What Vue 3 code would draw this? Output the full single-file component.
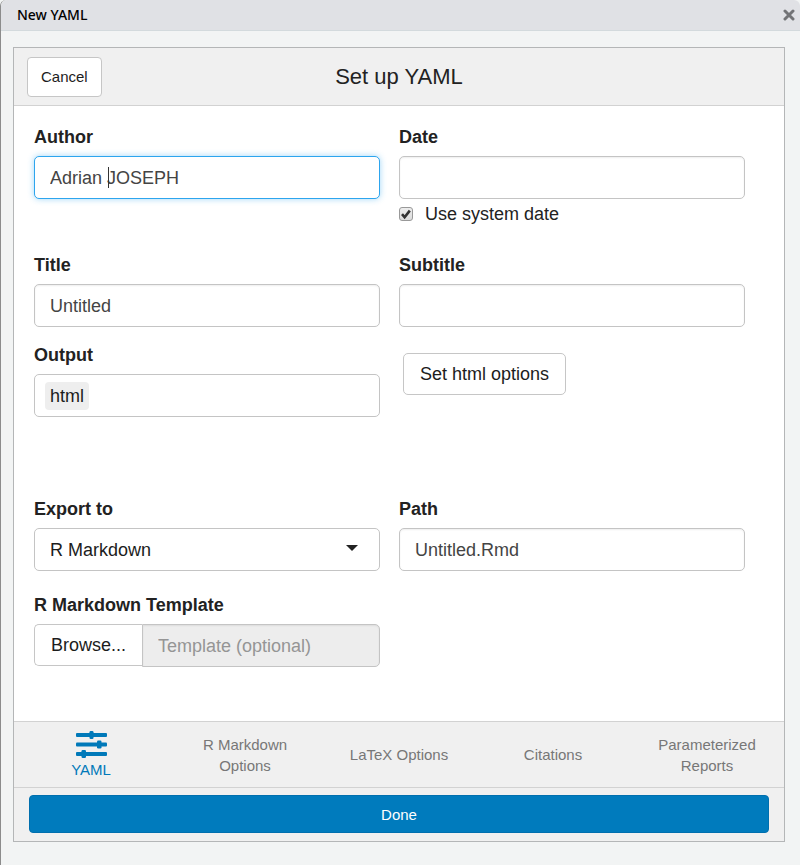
<script setup>
import { reactive, ref } from 'vue'

const form = reactive({
  author: 'Adrian JOSEPH',
  date: '',
  useSystemDate: true,
  title: 'Untitled',
  subtitle: '',
  output: 'html',
  outputQuery: '',
  exportTo: 'R Markdown',
  path: 'Untitled.Rmd'
})

const tabs = [
  { id: 'yaml', label: 'YAML' },
  { id: 'rmd', label: 'R Markdown Options' },
  { id: 'latex', label: 'LaTeX Options' },
  { id: 'citations', label: 'Citations' },
  { id: 'params', label: 'Parameterized Reports' }
]
const activeTab = ref('yaml')
</script>

<template>
  <div class="window">
    <header class="titlebar">
      <span>New YAML</span>
      <button type="button" class="close" aria-label="Close">
        <svg viewBox="0 0 12 12" width="12" height="12" aria-hidden="true">
          <path d="M2 2L10 10M10 2L2 10" fill="none" stroke="#727376" stroke-width="3" stroke-linecap="round" />
        </svg>
      </button>
    </header>

    <main class="panel">
      <div class="toolbar">
        <button type="button" class="btn btn-small">Cancel</button>
        <h1>Set up YAML</h1>
      </div>

      <form class="form" @submit.prevent>
        <div class="row row-first">
          <div class="field">
            <label for="author">Author</label>
            <div class="overlay-box">
              <input id="author" v-model="form.author" class="control focused" type="text" />
              <span class="caret" aria-hidden="true"></span>
            </div>
          </div>
          <div class="field">
            <label for="date">Date</label>
            <input id="date" v-model="form.date" class="control" type="text" />
            <div class="check">
              <input id="sysdate" v-model="form.useSystemDate" type="checkbox" />
              <svg v-if="form.useSystemDate" class="tick" viewBox="0 0 14 14" width="14" height="14" aria-hidden="true">
                <path d="M3 7.2L5.6 10.2L10.8 3.6" fill="none" stroke="#333" stroke-width="2.6" />
              </svg>
              <label for="sysdate">Use system date</label>
            </div>
          </div>
        </div>

        <div class="row row-title">
          <div class="field">
            <label for="title">Title</label>
            <input id="title" v-model="form.title" class="control" type="text" />
          </div>
          <div class="field">
            <label for="subtitle">Subtitle</label>
            <input id="subtitle" v-model="form.subtitle" class="control" type="text" />
          </div>
        </div>

        <div class="row row-output">
          <div class="field">
            <label for="output">Output</label>
            <div class="control tags">
              <span class="tag">{{ form.output }}</span>
              <input id="output" v-model="form.outputQuery" type="text" />
            </div>
          </div>
          <div class="action">
            <button type="button" class="btn">Set html options</button>
          </div>
        </div>

        <div class="row row-export">
          <div class="field">
            <label for="export">Export to</label>
            <div class="overlay-box">
              <select id="export" v-model="form.exportTo" class="control">
                <option>R Markdown</option>
              </select>
              <svg class="arrow" viewBox="0 0 12 6" width="12" height="6" aria-hidden="true">
                <path d="M0 0H12L6 6Z" fill="#222" />
              </svg>
            </div>
          </div>
          <div class="field">
            <label for="path">Path</label>
            <input id="path" v-model="form.path" class="control" type="text" />
          </div>
        </div>

        <div class="row">
          <div class="field">
            <label for="template">R Markdown Template</label>
            <div class="group">
              <button type="button" class="btn">Browse...</button>
              <input id="template" class="control" type="text" placeholder="Template (optional)" readonly />
            </div>
          </div>
        </div>
      </form>

      <nav class="tabs">
        <a
          v-for="tab in tabs"
          :key="tab.id"
          :href="'#' + tab.id"
          :class="{ active: tab.id === activeTab }"
          @click.prevent="activeTab = tab.id"
        >
          <svg v-if="tab.id === 'yaml'" viewBox="0 0 31 28" width="31" height="28" aria-hidden="true">
            <g fill="currentColor">
              <rect x="0" y="3" width="31" height="4" rx="1" />
              <rect x="0" y="12.5" width="31" height="4" rx="1" />
              <rect x="0" y="22" width="31" height="4" rx="1" />
              <rect x="13.5" y="1" width="4" height="8" rx="1.2" />
              <rect x="21" y="10.5" width="4.5" height="8" rx="1.2" />
              <rect x="5.5" y="20" width="4.5" height="8" rx="1.2" />
            </g>
          </svg>
          <span>{{ tab.label }}</span>
        </a>
      </nav>

      <footer class="footer">
        <button type="button" class="done">Done</button>
      </footer>
    </main>
  </div>
</template>

<style>
body {
  background: #f2f4f4;
}
</style>

<style scoped>
* {
  box-sizing: border-box;
}

.window {
  min-height: 100vh;
  padding-bottom: 23px;
  border-left: 1px solid #8c8c8c;
  border-radius: 6px 6px 0 0;
  background: #f2f4f4;
  font-family: "Liberation Sans", Helvetica, Arial, sans-serif;
  color: #222;
}

.titlebar {
  display: flex;
  align-items: center;
  justify-content: space-between;
  height: 31px;
  padding: 0 5px 1px 16px;
  border-bottom: 1px solid #d3dadd;
  border-radius: 6px 6px 0 0;
  background: #e0e1e5;
  font-family: "Noto Sans", "Open Sans", sans-serif;
  font-size: 14px;
  font-weight: 500;
  line-height: 20px;
  color: #000;
}

.close {
  display: flex;
  padding: 0;
  border: 0;
  background: none;
}

.panel {
  margin: 16px 15px 0 12px;
  border: 1px solid #b4b6b7;
  background: #fff;
}

.toolbar {
  display: grid;
  grid-template-columns: 1fr auto 1fr;
  align-items: center;
  height: 58px;
  padding: 0 13px;
  border-bottom: 1px solid #d2d2d2;
  background: #f0f0f0;
}

h1 {
  margin: 0;
  font-size: 22px;
  font-weight: 500;
  line-height: 28px;
}

.btn {
  height: 42px;
  padding: 0 16px;
  border: 1px solid #c6c6c6;
  border-radius: 5px;
  background: #fff;
  font-family: inherit;
  font-size: 18px;
  color: #1c1c1c;
}

.btn-small {
  justify-self: start;
  height: 40px;
  padding: 0 13px;
  border-radius: 4px;
  font-size: 15px;
}

.form {
  padding: 18px 39px 54px 20px;
}

.row {
  display: grid;
  grid-template-columns: 1fr 1fr;
  column-gap: 19px;
}

.row-first {
  margin-bottom: 25px;
}

.row-title {
  margin-bottom: 15px;
}

.row-output {
  margin-bottom: 79px;
}

.row-export {
  margin-bottom: 21px;
}

.field {
  display: flex;
  flex-direction: column;
  min-width: 0;
}

.field > label {
  margin-bottom: 6px;
  font-size: 18px;
  font-weight: 700;
  line-height: 26px;
}

.control {
  width: 100%;
  height: 43px;
  padding: 2px 15px 0;
  border: 1px solid #c4c4c4;
  border-radius: 5px;
  outline: 0;
  background: #fff;
  box-shadow: inset 0 1px 2px rgba(0, 0, 0, 0.07);
  font-family: inherit;
  font-size: 18px;
  color: #444;
}

.focused {
  border-color: #2da5ee;
  box-shadow: 0 0 6px rgba(45, 165, 238, 0.45);
}

.overlay-box {
  position: relative;
}

.caret {
  position: absolute;
  top: 11px;
  left: 74px;
  width: 1px;
  height: 21px;
  background: #333;
}

.check {
  position: relative;
  display: flex;
  align-items: center;
  gap: 12px;
  margin-top: 2px;
  font-size: 18px;
  line-height: 26px;
}

.check input {
  width: 14px;
  height: 14px;
  margin: 0;
  appearance: none;
  border: 1px solid #999;
  border-radius: 3px;
  background: linear-gradient(#ededed, #dcdcdc);
}

.tick {
  position: absolute;
  left: 0;
  pointer-events: none;
}

.tags {
  display: flex;
  align-items: center;
  gap: 4px;
  padding: 0 10px;
  box-shadow: none;
}

.tag {
  padding: 0 5px;
  border-radius: 4px;
  background: #eee;
  line-height: 28px;
  color: #1c1c1c;
}

.tags input {
  flex: 1;
  min-width: 0;
  border: 0;
  outline: 0;
  background: none;
  font: inherit;
}

.action {
  padding: 11px 4px 0;
}

select.control {
  padding: 0 15px;
  appearance: none;
  box-shadow: none;
  color: #1c1c1c;
}

.arrow {
  position: absolute;
  top: 17px;
  right: 22px;
  pointer-events: none;
}

.group {
  display: flex;
}

.group .btn {
  border-right: 0;
  border-radius: 5px 0 0 5px;
}

.group .control {
  flex: 1;
  min-width: 0;
  border-radius: 0 5px 5px 0;
  background: #ededed;
}

.group .control::placeholder {
  color: #959595;
  opacity: 1;
}

.tabs {
  display: grid;
  grid-template-columns: repeat(5, 1fr);
  height: 67px;
  border-top: 1px solid #d2d2d2;
  border-bottom: 1px solid #d2d2d2;
  background: #f0f0f0;
}

.tabs a {
  display: flex;
  flex-direction: column;
  align-items: center;
  justify-content: center;
  gap: 1px;
  padding: 0 24px;
  font-size: 15px;
  line-height: 21px;
  text-align: center;
  text-decoration: none;
  color: #777;
}

.tabs .active {
  color: #0079b9;
}

.footer {
  padding: 7px 15px 8px;
  background: #f0f0f0;
}

.done {
  display: block;
  width: 100%;
  height: 38px;
  border: 1px solid #006fae;
  border-radius: 4px;
  background: #007bbd;
  font-family: inherit;
  font-size: 15px;
  color: #fff;
}
</style>
